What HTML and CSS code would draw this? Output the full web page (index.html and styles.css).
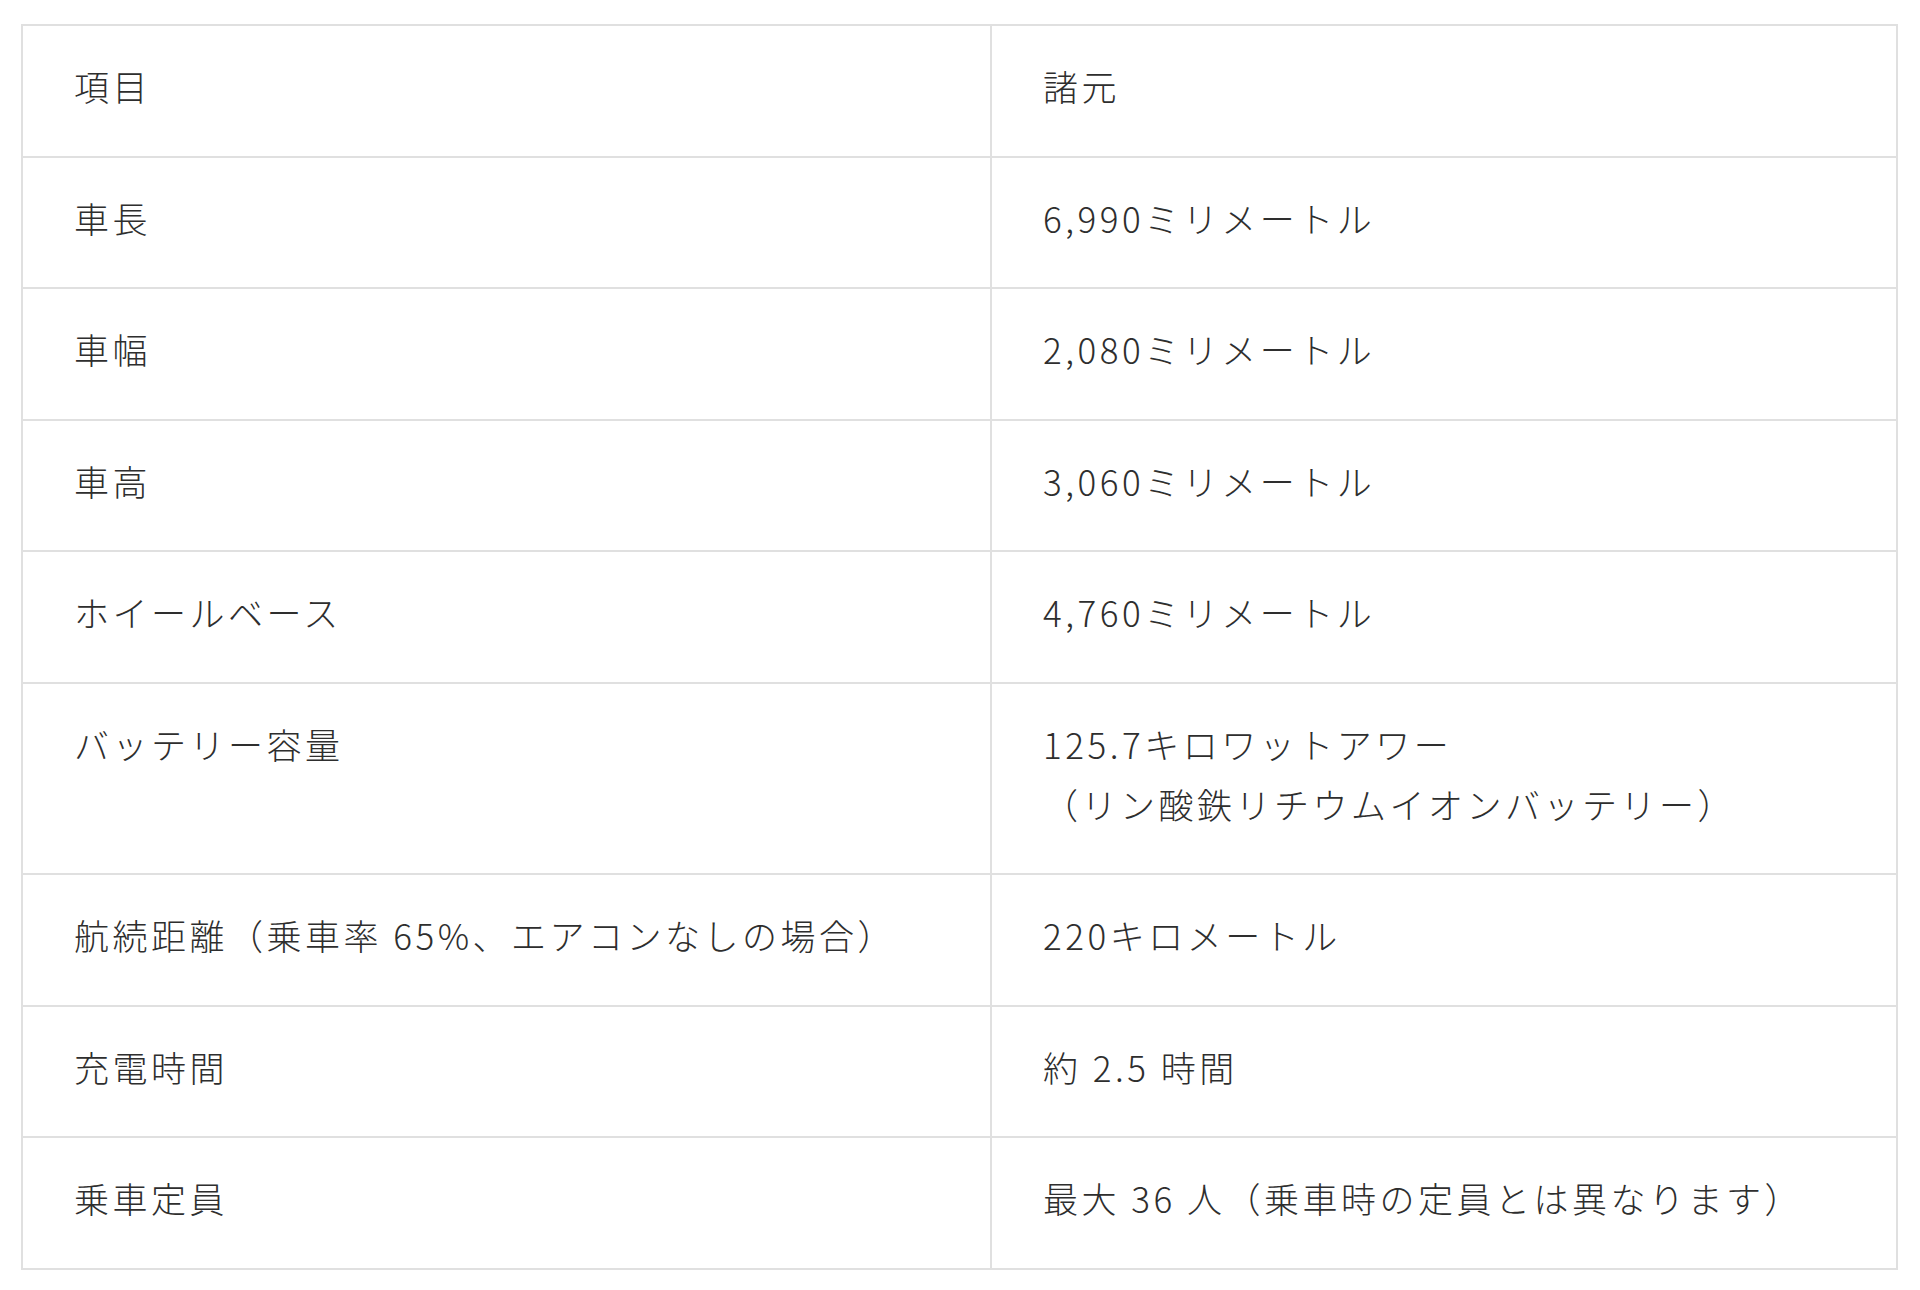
FILE: index.html
```html
<!DOCTYPE html>
<html lang="ja">
<head>
<meta charset="utf-8">
<link rel="stylesheet" href="styles.css">
</head>
<body>
<table class="spec">
  <colgroup><col class="c1"><col class="c2"></colgroup>
  <tr><td>項目</td><td>諸元</td></tr>
  <tr><td>車長</td><td>6,990ミリメートル</td></tr>
  <tr><td>車幅</td><td>2,080ミリメートル</td></tr>
  <tr><td>車高</td><td>3,060ミリメートル</td></tr>
  <tr><td>ホイールベース</td><td>4,760ミリメートル</td></tr>
  <tr><td>バッテリー容量</td><td>125.7キロワットアワー<br>（リン酸鉄リチウムイオンバッテリー）</td></tr>
  <tr><td>航続距離（乗車率 65%、エアコンなしの場合）</td><td>220キロメートル</td></tr>
  <tr><td>充電時間</td><td>約 2.5 時間</td></tr>
  <tr><td>乗車定員</td><td>最大 36 人（乗車時の定員とは異なります）</td></tr>
</table>
</body>
</html>
```
FILE: styles.css
```css
html, body {
  margin: 0;
  padding: 0;
  background: #ffffff;
}
body {
  padding: 24px 0 0 21px;
  font-family: "Noto Sans CJK JP", "Noto Sans", sans-serif;
  font-weight: 300;
  color: #2e2e2e;
}
.spec {
  border-collapse: collapse;
  width: 1875px;
  table-layout: fixed;
}
.spec .c1 { width: 969px; }
.spec .c2 { width: 906px; }
.spec td {
  border: 2px solid #e0e0e0;
  padding: 30px 10px 39.5px 51px;
  font-size: 35px;
  line-height: 60px;
  vertical-align: top;
  letter-spacing: 3.5px;
  white-space: nowrap;
}
```
